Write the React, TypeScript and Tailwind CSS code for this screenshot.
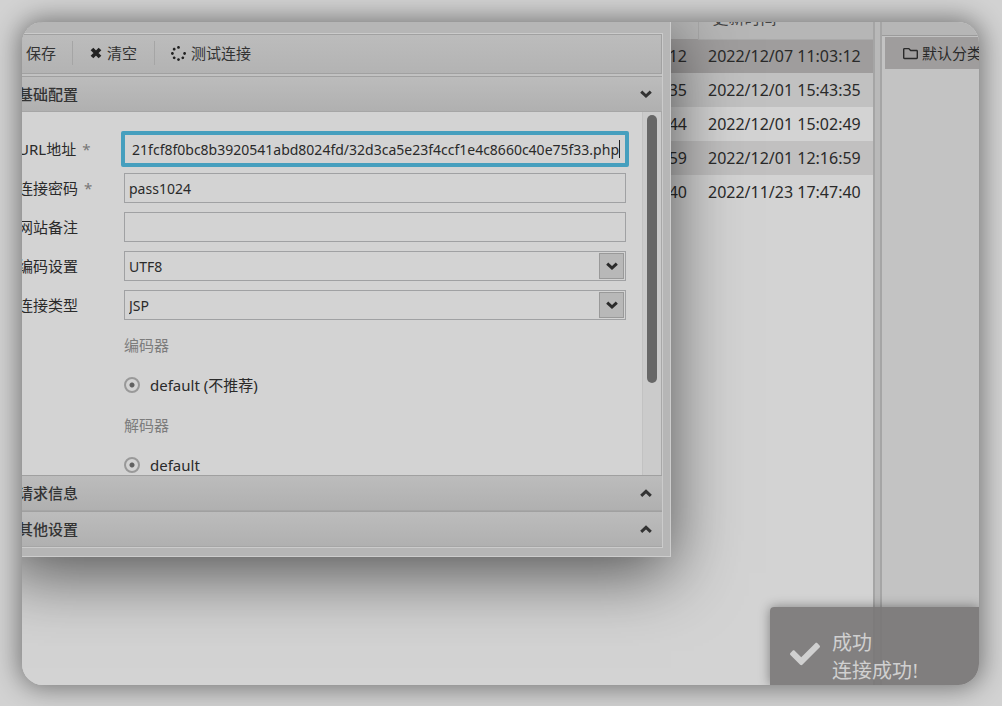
import { useEffect, useRef, useState } from "react";
import type { ReactNode } from "react";
import { FaCheck, FaRegFolder, FaSpinner } from "react-icons/fa";

const rows = [
  { created: "12", updated: "2022/12/07 11:03:12", tone: "bg-[#9f9d9d]" },
  { created: "35", updated: "2022/12/01 15:43:35", tone: "bg-[#c1c1c1]" },
  { created: "44", updated: "2022/12/01 15:02:49", tone: "bg-[#d3d3d3]" },
  { created: "59", updated: "2022/12/01 12:16:59", tone: "bg-[#c1c0c0]" },
  { created: "40", updated: "2022/11/23 17:47:40", tone: "bg-[#d3d3d3]" },
];

function Chevron({ up = false }: { up?: boolean }) {
  return (
    <svg viewBox="0 0 12 12" className="size-3" fill="none" stroke="currentColor" strokeWidth="3" aria-hidden="true">
      <path d={up ? "M1.2 8.8 6 4.4l4.8 4.4" : "M1.2 3.6 6 8l4.8-4.4"} />
    </svg>
  );
}

function Cross() {
  return (
    <svg viewBox="0 0 12 12" className="size-3" fill="none" stroke="#222" strokeWidth="3.8" aria-hidden="true">
      <path d="M2 2l8 8M10 2l-8 8" />
    </svg>
  );
}

function SiteTable() {
  return (
    <div className="min-w-0 flex-1 bg-[#d3d3d3]">
      <table className="-mt-[23px] w-full table-fixed border-collapse text-base">
        <thead>
          <tr className="h-10 bg-[#b6b6b6]">
            <th className="border-r border-[#a9a9a9]" aria-label="创建时间" />
            <th className="w-[175px] border-b border-[#aaa] px-3.5 pb-0.5 text-left font-normal text-[#444]">更新时间</th>
          </tr>
        </thead>
        <tbody>
          {rows.map((r) => (
            <tr key={r.updated} className={`h-[34px] ${r.tone}`}>
              <td className="px-[11px] text-right">{r.created}</td>
              <td className="whitespace-nowrap px-2.5">{r.updated}</td>
            </tr>
          ))}
        </tbody>
      </table>
    </div>
  );
}

function Sidebar() {
  return (
    <aside className="w-[97px] shrink-0 overflow-hidden bg-[#c3c3c3]">
      <div className="h-[14px] border-b border-[#9b9b9b] bg-[#b6b6b6]" />
      <div className="pl-[3px] pt-px">
        <button className="flex h-8 w-full items-center gap-1 whitespace-nowrap bg-[#9f9d9d] pl-[18px] text-[15px]">
          <FaRegFolder className="size-[15px] shrink-0" />
          默认分类
        </button>
      </div>
    </aside>
  );
}

function Section({ title, open = false }: { title: string; open?: boolean }) {
  return (
    <button
      aria-expanded={open}
      className="flex h-9 w-full shrink-0 items-center justify-between border-y border-t-[#a0a0a0] border-b-[#a6a6a6] bg-linear-to-b from-[#bcbcbc] to-[#b0b0b0] pl-3 pr-2.5 text-[15px] font-medium text-[#333]"
    >
      {title}
      <Chevron up={!open} />
    </button>
  );
}

function Row({ id, label, required = false, children }: { id: string; label: string; required?: boolean; children: ReactNode }) {
  return (
    <div className="flex h-[30px] items-center">
      <label htmlFor={id} className="w-[108px] shrink-0 whitespace-nowrap pl-0.5 text-[15px]">
        {label}
        {required && <span className="ml-1.5 text-[#777]">*</span>}
      </label>
      <div className="relative min-w-0 flex-1">{children}</div>
    </div>
  );
}

const box = "block h-[30px] w-full border border-[#a0a1a3] bg-[#d3d3d3] px-1 text-[14px] outline-none";

function Select({ id, value }: { id: string; value: string }) {
  return (
    <>
      <select id={id} className={`${box} appearance-none rounded-none`}>
        <option>{value}</option>
      </select>
      <span className="pointer-events-none absolute right-0.5 top-0.5 flex h-[26px] w-[25px] items-center justify-center border border-[#999] bg-[#b8b8b8]">
        <Chevron />
      </span>
    </>
  );
}

function Radio({ name, label }: { name: string; label: string }) {
  return (
    <label className="flex h-5 items-center gap-2.5 text-[15px]">
      <input
        type="radio"
        name={name}
        defaultChecked
        className="size-4 appearance-none rounded-full border-2 border-[#999] bg-[radial-gradient(circle,#606060_0_2px,#d3d3d3_3px)]"
      />
      {label}
    </label>
  );
}

function Dialog() {
  const urlRef = useRef<HTMLInputElement>(null);
  const [url, setUrl] = useState("21fcf8f0bc8b3920541abd8024fd/32d3ca5e23f4ccf1e4c8660c40e75f33.php");

  useEffect(() => {
    const el = urlRef.current;
    if (!el) return;
    el.focus();
    el.setSelectionRange(el.value.length, el.value.length);
  }, []);

  return (
    <section
      role="dialog"
      aria-label="编辑"
      className="absolute -left-4 right-[308px] top-0 flex flex-col border-b border-r border-[#cdcdcd] bg-[#b6b6b6] pb-2 pr-[7px] pt-[11px] shadow-[0_16px_64px_rgba(0,0,0,0.62)]"
    >
      <div className="flex flex-col border-b border-r border-t border-[#cbcbcb]">
        <div className="flex h-10 items-center border-y border-r border-[#a1a1a1] bg-linear-to-b from-[#bcbcbc] to-[#b3b3b3] pb-0.5 pl-5 text-[15px] text-[#333]">
          <button className="pr-4">保存</button>
          <span className="h-6 w-px bg-[#a5a5a5]" />
          <button className="flex items-center gap-[5px] px-[17px]">
            <Cross />
            清空
          </button>
          <span className="h-6 w-px bg-[#a5a5a5]" />
          <button className="flex items-center gap-[5px] px-4">
            <FaSpinner className="size-[15px] text-[#222]" />
            测试连接
          </button>
        </div>
        <div className="h-0.5 shrink-0 bg-[#c2c2c2]" />
        <Section title="基础配置" open />
        <div className="flex h-[363px] overflow-hidden border-r border-[#a8a8a8] bg-[#d3d3d3]">
          <form className="flex min-w-0 flex-1 flex-col gap-[9px] pl-2.5 pr-4 pt-[22px]" onSubmit={(e) => e.preventDefault()}>
            <Row id="url" label="URL地址" required>
              <div className="relative -mx-[3px] rounded-xs border-4 border-[#469fbe]">
                <input
                  id="url"
                  ref={urlRef}
                  value={url}
                  onChange={(e) => setUrl(e.target.value)}
                  className="block h-7 w-full bg-[#d3d3d3] px-1.5 text-right text-[14px] caret-transparent outline-none"
                />
                <span className="pointer-events-none absolute right-[5px] top-[5px] h-[18px] w-px animate-pulse bg-[#222]" />
              </div>
            </Row>
            <Row id="pwd" label="连接密码" required>
              <input id="pwd" defaultValue="pass1024" className={box} />
            </Row>
            <Row id="note" label="网站备注">
              <input id="note" className={box} />
            </Row>
            <Row id="encode" label="编码设置">
              <Select id="encode" value="UTF8" />
            </Row>
            <Row id="type" label="连接类型">
              <Select id="type" value="JSP" />
            </Row>
            <div className="flex flex-col gap-5 pl-[108px] pt-1.5 text-[15px]">
              <div className="h-5 leading-5 text-[#7c7c7c]">编码器</div>
              <Radio name="encoder" label="default (不推荐)" />
              <div className="h-5 leading-5 text-[#7c7c7c]">解码器</div>
              <Radio name="decoder" label="default" />
            </div>
          </form>
          <div className="flex w-[19px] shrink-0 justify-center border-l border-[#c2c2c2] bg-[#cbcbcb] pt-[3px]">
            <div className="h-[268px] w-2.5 rounded-full bg-[#676767]" />
          </div>
        </div>
        <Section title="请求信息" />
        <Section title="其他设置" />
      </div>
    </section>
  );
}

function Toast() {
  return (
    <div
      role="status"
      className="absolute bottom-0 right-0 flex h-[78px] w-[209px] gap-3 rounded-tl-sm bg-[#797777]/90 pl-5 pt-[22px] font-['Liberation_Serif','Noto_Sans_CJK_SC',serif] text-[20px] leading-7 text-[#d0d0d0] shadow-[0_0_12px_rgba(0,0,0,0.4)]"
    >
      <FaCheck className="mt-2.5 size-[30px] shrink-0" />
      <div>
        <p>成功</p>
        <p>连接成功!</p>
      </div>
    </div>
  );
}

export default function App() {
  return (
    <div className="flex min-h-screen bg-[#d2d2d2] p-[22px] pb-[21px] pr-[23px] font-['Noto_Sans','Noto_Sans_CJK_SC',sans-serif] text-[#2a2a2a]">
      <main className="relative flex min-w-0 flex-1 overflow-hidden rounded-[21px] bg-[#d3d3d3] shadow-[0_0_26px_3px_rgba(0,0,0,0.45)]">
        <SiteTable />
        <div className="w-[9px] shrink-0 border-x-2 border-[#a5a5a5] bg-[#b9b9b9]" />
        <Sidebar />
        <Dialog />
        <Toast />
      </main>
    </div>
  );
}
